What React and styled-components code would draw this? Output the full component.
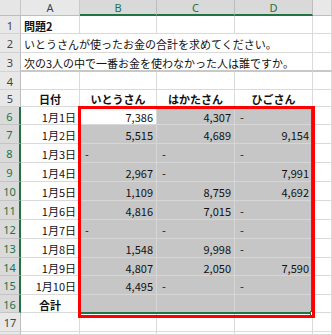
import React from 'react'
import styled, { createGlobalStyle } from 'styled-components'

const GlobalStyle = createGlobalStyle`
  html, body {
    margin: 0;
    padding: 0;
    background: #ffffff;
    overflow: hidden;
  }
`

const COLS = [21, 59, 77, 78, 78, 19]
const ROW_H = [16, 18, 19, 19, 18, 17, 18, 19, 19, 19, 19, 19, 19, 19, 18, 19, 18, 19, 3]
const GREEN = '#217346'

const Wrap = styled.div`
  position: relative;
  width: 332px;
  height: 335px;
  overflow: hidden;
`

const Sheet = styled.div`
  display: grid;
  grid-template-columns: ${COLS.map((c) => c + 'px').join(' ')};
  grid-template-rows: ${ROW_H.map((h) => h + 'px').join(' ')};
  font-family: 'Noto Sans CJK JP', 'Noto Sans', sans-serif;
  font-size: 11px;
  color: #111;
`

const Corner = styled.div`
  background: #e6e6e6;
  border-right: 1px solid #c6c6c6;
  border-bottom: 1px solid #bdbdbd;
  box-sizing: border-box;
`

const ColHead = styled.div`
  display: flex;
  align-items: center;
  justify-content: center;
  box-sizing: border-box;
  background: ${(p) => (p.$sel ? '#d9d9d9' : '#e8e8e8')};
  color: ${(p) => (p.$sel ? GREEN : '#444')};
  border-right: 1px solid ${(p) => (p.$sel ? '#bdbdbd' : '#cbcbcb')};
  border-bottom: ${(p) => (p.$sel ? `2px solid ${GREEN}` : '1px solid #bdbdbd')};
  font-family: 'Noto Sans', sans-serif;
  font-size: 11px;
  padding-top: ${(p) => (p.$sel ? '1px' : '0')};
`

const RowHead = styled.div`
  display: flex;
  align-items: center;
  justify-content: center;
  box-sizing: border-box;
  overflow: hidden;
  background: ${(p) => (p.$sel ? '#dadada' : '#e8e8e8')};
  color: ${(p) => (p.$sel ? GREEN : '#444')};
  border-bottom: 1px solid ${(p) => (p.$sel ? '#c4c4c4' : '#d2d2d2')};
  border-right: ${(p) => (p.$sel ? `2px solid ${GREEN}` : '1px solid #bdbdbd')};
  font-family: 'Noto Sans', sans-serif;
  font-size: 11px;
  padding-top: 1px;
`

const Cell = styled.div`
  display: flex;
  align-items: center;
  box-sizing: border-box;
  grid-column: ${(p) => (p.$span ? `span ${p.$span}` : 'auto')};
  justify-content: ${(p) =>
    p.$align === 'right' ? 'flex-end' : p.$align === 'center' ? 'center' : 'flex-start'};
  padding: 2px ${(p) => (p.$align === 'right' ? '3px' : '0')} 0
    ${(p) => (p.$align === 'dash' ? '5px' : p.$align === 'left' ? '3px' : '0')};
  font-weight: ${(p) => (p.$bold ? 700 : 400)};
  background: ${(p) => (p.$shade ? '#c6c6c6' : '#ffffff')};
  border-right: 1px solid ${(p) => (p.$shade ? '#d6d6d6' : '#dadada')};
  border-bottom: ${(p) =>
    p.$thick ? '2px solid #c8c8c8' : `1px solid ${p.$shade ? '#d6d6d6' : '#dadada'}`};
  white-space: nowrap;
`

const SelectBorder = styled.div`
  position: absolute;
  left: 79px;
  top: 106px;
  width: 234px;
  height: 208px;
  box-sizing: border-box;
  border: 2px solid ${GREEN};
  pointer-events: none;
`

const FillHandle = styled.div`
  position: absolute;
  left: 310px;
  top: 311px;
  width: 3px;
  height: 3px;
  background: #ffffff;
  border: 1px solid ${GREEN};
`

const RedBox = styled.div`
  position: absolute;
  left: 78px;
  top: 106px;
  width: 237px;
  height: 212px;
  box-sizing: border-box;
  border: 3px solid #ff0000;
  pointer-events: none;
`

const LETTERS = ['A', 'B', 'C', 'D', '']

const DATA = [
  ['1月1日', '7,386', '4,307', '-'],
  ['1月2日', '5,515', '4,689', '9,154'],
  ['1月3日', '-', '-', '-'],
  ['1月4日', '2,967', '-', '7,991'],
  ['1月5日', '1,109', '8,759', '4,692'],
  ['1月6日', '4,816', '7,015', '-'],
  ['1月7日', '-', '-', '-'],
  ['1月8日', '1,548', '9,998', '-'],
  ['1月9日', '4,807', '2,050', '7,590'],
  ['1月10日', '4,495', '-', '-'],
]

function renderRow(n) {
  const sel = n >= 6 && n <= 16
  const cells = []

  if (n === 1) {
    cells.push(<Cell key="a" $align="left" $bold>問題2</Cell>)
    for (let i = 1; i < 5; i++) cells.push(<Cell key={i} />)
  } else if (n === 2 || n === 3) {
    const text =
      n === 2
        ? 'いとうさんが使ったお金の合計を求めてください。'
        : '次の3人の中で一番お金を使わなかった人は誰ですか。'
    cells.push(
      <Cell key="a" $align="left" $span={4} $thick={n === 3}>
        {text}
      </Cell>
    )
    cells.push(<Cell key="e" $thick={n === 3} />)
  } else if (n === 5) {
    ;['日付', 'いとうさん', 'はかたさん', 'ひごさん'].forEach((t, i) =>
      cells.push(
        <Cell key={i} $align="center" $bold>
          {t}
        </Cell>
      )
    )
    cells.push(<Cell key="e" />)
  } else if (n >= 6 && n <= 15) {
    const row = DATA[n - 6]
    row.forEach((v, i) => {
      const shade = i > 0 && !(n === 6 && i === 1)
      const align = i === 0 ? 'right' : v === '-' ? 'dash' : 'right'
      cells.push(
        <Cell key={i} $align={align} $shade={shade}>
          {v}
        </Cell>
      )
    })
    cells.push(<Cell key="e" />)
  } else if (n === 16) {
    cells.push(
      <Cell key="a" $align="center" $bold>
        合計
      </Cell>
    )
    for (let i = 1; i < 4; i++) cells.push(<Cell key={i} $shade />)
    cells.push(<Cell key="e" />)
  } else {
    for (let i = 0; i < 5; i++) cells.push(<Cell key={i} />)
  }

  return (
    <React.Fragment key={n}>
      <RowHead $sel={sel}>{n <= 17 ? n : ''}</RowHead>
      {cells}
    </React.Fragment>
  )
}

export default function App() {
  const rowNums = Array.from({ length: 18 }, (_, i) => i + 1)
  return (
    <Wrap>
      <GlobalStyle />
      <Sheet>
        <Corner />
        {LETTERS.map((l, i) => (
          <ColHead key={i} $sel={i >= 1 && i <= 3}>
            {l}
          </ColHead>
        ))}
        {rowNums.map(renderRow)}
      </Sheet>
      <SelectBorder />
      <FillHandle />
      <RedBox />
    </Wrap>
  )
}
